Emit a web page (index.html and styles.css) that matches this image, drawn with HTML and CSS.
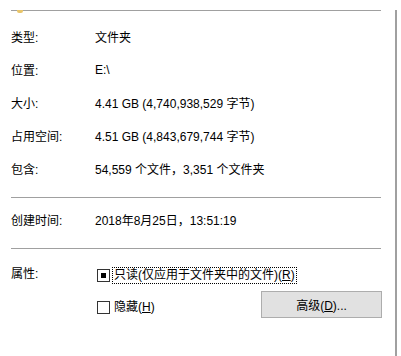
FILE: index.html
```html
<!DOCTYPE html>
<html lang="zh-CN">
<head>
    <meta charset="UTF-8">
    <title>属性</title>
    <link rel="stylesheet" href="styles.css">
</head>
<body>

<div class="panel">
    <div class="top-icon"></div>
    <hr class="sep sep-top">

    <div class="info">
        <div class="row"><span class="label">类型:</span><span class="value">文件夹</span></div>
        <div class="row"><span class="label">位置:</span><span class="value">E:\</span></div>
        <div class="row"><span class="label">大小:</span><span class="value">4.41 GB (4,740,938,529 字节)</span></div>
        <div class="row"><span class="label">占用空间:</span><span class="value">4.51 GB (4,843,679,744 字节)</span></div>
        <div class="row"><span class="label">包含:</span><span class="value">54,559 个文件，3,351 个文件夹</span></div>
    </div>

    <hr class="sep">

    <div class="info info-date">
        <div class="row"><span class="label">创建时间:</span><span class="value">2018年8月25日，13:51:19</span></div>
    </div>

    <hr class="sep">

    <div class="attrs">
        <span class="label">属性:</span>
        <div class="attr-list">
            <div class="check-row">
                <span class="box mixed"></span>
                <span class="check-text focus">只读(仅应用于文件夹中的文件)(<u>R</u>)</span>
            </div>
            <div class="check-row second">
                <span class="box"></span>
                <span class="check-text">隐藏(<u>H</u>)</span>
                <button type="button" class="adv-btn">高级(<u>D</u>)...</button>
            </div>
        </div>
    </div>
</div>

</body>
</html>
```

FILE: styles.css
```css
body {
    margin: 0;
    background: #ffffff;
    font-family: "Liberation Sans", "Noto Sans CJK SC", sans-serif;
    font-size: 12px;
    color: #000000;
}
.panel {
    position: relative;
    width: 397px;
    height: 356px;
    border-right: 2px solid #a0a0a0;
    box-sizing: border-box;
    padding-left: 11px;
}
/* bit of the folder icon cut off at the top */
.top-icon {
    position: absolute;
    left: 17px;
    top: 0;
    width: 6px;
    height: 3px;
    background: #e8c56a;
    border-radius: 0 0 2px 2px;
}
.sep {
    border: none;
    border-top: 1px solid #a0a0a0;
    width: 370px;
    margin: 0;
}
.sep-top {
    margin-top: 10px;
}
.info {
    padding: 9px 0 12px;
}
.info-date {
    padding: 5px 0 12px;
}
.row {
    display: flex;
    height: 33px;
    align-items: center;
}
.label {
    width: 84px;
    flex-shrink: 0;
}
.attrs {
    display: flex;
    padding-top: 18px;
}
.attrs .label {
    line-height: 16px;
    margin-top: -1px;
}
.attr-list {
    flex: 1;
    margin-left: 2px;
}
.check-row {
    display: flex;
    align-items: center;
    height: 17px;
}
.check-row.second {
    margin-top: 15px;
}
.box {
    width: 11px;
    height: 11px;
    border: 1px solid #333333;
    background: #ffffff;
    display: flex;
    align-items: center;
    justify-content: center;
    flex-shrink: 0;
}
.box.mixed::after {
    content: "";
    width: 5px;
    height: 5px;
    background: #000000;
}
.check-text {
    margin-left: 2px;
    padding: 0 1px;
    line-height: 15px;
    border: 1px dotted transparent;
}
.check-text.focus {
    border-color: #000000;
}
.adv-btn {
    margin-left: auto;
    margin-right: 13px;
    margin-top: -6px;
    width: 121px;
    height: 27px;
    background: #e1e1e1;
    border: 1px solid #adadad;
    font-family: inherit;
    font-size: 12px;
    color: #000000;
    padding: 0;
}
```
